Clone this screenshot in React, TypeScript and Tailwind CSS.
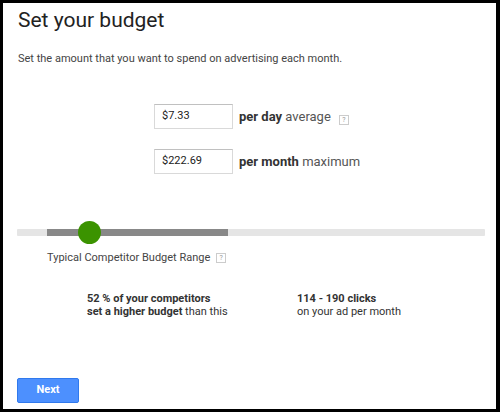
export default function App() {
  return (
    <div
      className="w-[500px] h-[412px] bg-white border-black border-t-[3px] border-l-[3px] border-r-[4px] border-b-[3px] text-[#444]"
      style={{ fontFamily: "Roboto, 'Liberation Sans', sans-serif" }}
    >
      <h1 className="pl-[15px] pt-[4px] text-[21px] leading-[26px] text-[#222]">Set your budget</h1>
      <p className="pl-[15px] mt-[19px] text-[11px] leading-[14px]">
        Set the amount that you want to spend on advertising each month.
      </p>

      <div className="ml-[151px] mt-[38px] flex flex-col gap-[20px]">
        <BudgetRow value="$7.33" strong="per day" rest="average" help />
        <BudgetRow value="$222.69" strong="per month" rest="maximum" />
      </div>

      <div className="relative mt-[55px] ml-[14px] w-[468px] h-[7px] bg-[#e5e5e5] rounded-[1px]">
        <div className="absolute left-[30px] top-0 w-[181px] h-[7px] bg-[#888]" />
        <div className="absolute left-[61px] top-[-8px] w-[23px] h-[23px] rounded-full bg-[#3b9300]" />
      </div>

      <div className="ml-[44px] mt-[14px] flex items-center gap-[6px] text-[11px]">
        <span>Typical Competitor Budget Range</span>
        <HelpIcon />
      </div>

      <div className="mt-[25px] ml-[84px] flex text-[11px] leading-[13px] text-[#333]">
        <div className="w-[210px]">
          <div className="font-bold">52 % of your competitors</div>
          <div>
            <span className="font-bold">set a higher budget</span> than this
          </div>
        </div>
        <div>
          <div className="font-bold">114 - 190 clicks</div>
          <div>on your ad per month</div>
        </div>
      </div>

      <button className="ml-[14px] mt-[60px] w-[62px] h-[25px] rounded-[2px] border border-[#3079ed] bg-[#4d90fe] text-white text-[11px] font-bold">
        Next
      </button>
    </div>
  );
}

function BudgetRow({
  value,
  strong,
  rest,
  help,
}: {
  value: string;
  strong: string;
  rest: string;
  help?: boolean;
}) {
  return (
    <div className="flex items-center">
      <div className="w-[79px] h-[25px] border border-[#d9d9d9] border-t-[#c0c0c0] px-[7px] flex items-center text-[11px] text-[#222]">
        {value}
      </div>
      <span className="ml-[6px] text-[13px] text-[#555]">
        <span className="font-bold text-[#333]">{strong}</span> {rest}
      </span>
      {help && (
        <span className="ml-[8px]">
          <HelpIcon />
        </span>
      )}
    </div>
  );
}

function HelpIcon() {
  return (
    <span className="inline-flex w-[10px] h-[10px] items-center justify-center border border-[#ccc] text-[7px] leading-none text-[#999] bg-white">
      ?
    </span>
  );
}
